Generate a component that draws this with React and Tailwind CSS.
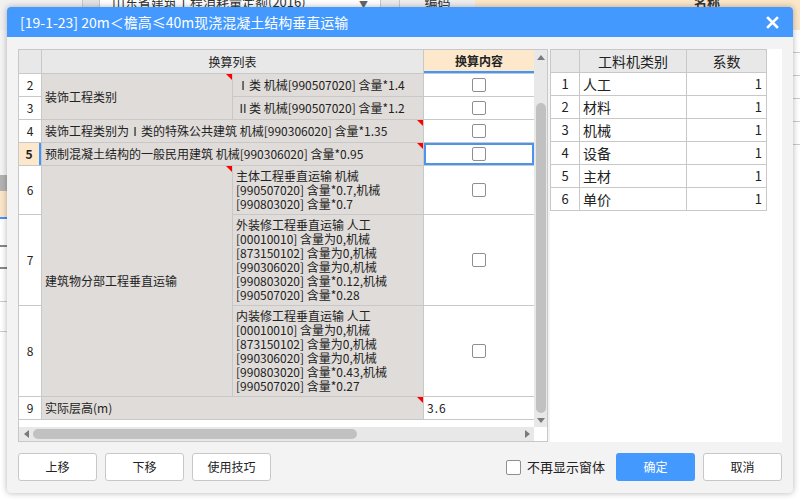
import React from 'react';

const cjk = "font-['Noto_Sans_CJK_SC','Liberation_Sans',sans-serif]";

const Tri = () => (
  <span className="absolute right-0 top-0 h-0 w-0 border-l-[6px] border-t-[6px] border-l-transparent border-t-[#ff0000]" />
);

const Box = () => (
  <span className="block h-[14px] w-[14px] rounded-[2px] border border-[#8f8f8f] bg-white" />
);

const Num = ({ n }) => (
  <div className="flex items-center justify-center bg-white text-[12px] text-[#222]">{n}</div>
);

const Check = () => (
  <div className="flex items-center justify-center bg-white">
    <Box />
  </div>
);

const Lines = ({ lines }) => (
  <div className="flex flex-col justify-center bg-[#e0dcd9] pl-[3px] text-[12px] leading-[14px] text-[#222]">
    {lines.map((l, i) => (
      <span key={i} className="whitespace-nowrap">{l}</span>
    ))}
  </div>
);

const LeftGrid = () => (
  <div className="grid grid-cols-[22px_190px_190px_110px] grid-rows-[23px_22px_22px_22px_22px_48px_90px_90px_22px] gap-px border-b border-[#c8c8c8] bg-[#c8c8c8] text-[12px] text-[#222]">
    {/* header */}
    <div className="bg-[#e8e8e8]" />
    <div className="col-span-2 flex items-center justify-center bg-[#e8e8e8]">换算列表</div>
    <div className="flex items-center justify-center border-b-2 border-[#4096ff] bg-[#fde8cc] font-bold">换算内容</div>

    {/* 2 */}
    <Num n="2" />
    <div className="relative row-span-2 flex items-center bg-[#e0dcd9] pl-[3px]">
      装饰工程类别
      <Tri />
    </div>
    <div className="flex items-center whitespace-nowrap bg-[#e0dcd9] pl-[4px]">Ⅰ类 机械[990507020] 含量*1.4</div>
    <Check />

    {/* 3 */}
    <Num n="3" />
    <div className="flex items-center whitespace-nowrap bg-[#e0dcd9] pl-[4px]">Ⅱ类 机械[990507020] 含量*1.2</div>
    <Check />

    {/* 4 */}
    <Num n="4" />
    <div className="relative col-span-2 flex items-center whitespace-nowrap bg-[#e0dcd9] pl-[3px]">
      装饰工程类别为Ⅰ类的特殊公共建筑 机械[990306020] 含量*1.35
      <Tri />
    </div>
    <Check />

    {/* 5 selected */}
    <div className="flex items-center justify-center border-r-2 border-[#4096ff] bg-[#fde8cc] text-[12px] font-bold">5</div>
    <div className="relative col-span-2 flex items-center whitespace-nowrap bg-[#e0dcd9] pl-[3px]">
      预制混凝土结构的一般民用建筑 机械[990306020] 含量*0.95
      <Tri />
    </div>
    <div className="flex items-center justify-center border-2 border-[#4a93ef] bg-white">
      <Box />
    </div>

    {/* 6 */}
    <Num n="6" />
    <div className="relative row-span-3 flex items-center bg-[#e0dcd9] pl-[3px]">
      建筑物分部工程垂直运输
      <Tri />
    </div>
    <Lines lines={['主体工程垂直运输 机械', '[990507020] 含量*0.7,机械', '[990803020] 含量*0.7']} />
    <Check />

    {/* 7 */}
    <Num n="7" />
    <Lines
      lines={[
        '外装修工程垂直运输 人工',
        '[00010010] 含量为0,机械',
        '[873150102] 含量为0,机械',
        '[990306020] 含量为0,机械',
        '[990803020] 含量*0.12,机械',
        '[990507020] 含量*0.28',
      ]}
    />
    <Check />

    {/* 8 */}
    <Num n="8" />
    <Lines
      lines={[
        '内装修工程垂直运输 人工',
        '[00010010] 含量为0,机械',
        '[873150102] 含量为0,机械',
        '[990306020] 含量为0,机械',
        '[990803020] 含量*0.43,机械',
        '[990507020] 含量*0.27',
      ]}
    />
    <Check />

    {/* 9 */}
    <Num n="9" />
    <div className="relative col-span-2 flex items-center bg-[#e0dcd9] pl-[3px]">
      实际层高(m)
      <Tri />
    </div>
    <div className="flex items-center bg-white pl-[3px] tracking-[1px]">3.6</div>
  </div>
);

const rightRows = ['人工', '材料', '机械', '设备', '主材', '单价'];

export default function App() {
  return (
    <div className={`relative h-[500px] w-[800px] overflow-hidden bg-white ${cjk}`}>
      {/* app behind the dialog */}
      <div className="flex h-[30px] text-[13px] text-[#333]">
        <div className="w-[83px] border-r border-[#c8c8c8] bg-[#f0f0f0]" />
        <div className="w-[17px] border-r border-[#c8c8c8] bg-[#e4e4e4]" />
        <div className="flex w-[280px] items-start justify-between bg-white px-[12px] leading-[10px]">
          <span className="-mt-[3px]">山东省建筑工程消耗量定额(2016)</span>
          <span className="text-[9px] text-[#666]">▼</span>
        </div>
        <div className="w-[20px] border-x border-[#c8c8c8] bg-[#ececec]" />
        <div className="flex w-[75px] justify-center bg-[#eeeeee] leading-[10px]">
          <span className="-mt-[3px]">编码</span>
        </div>
        <div className="flex flex-1 justify-end bg-[#fce6c9] pr-[80px] font-bold leading-[10px]">
          <span className="-mt-[3px]">名称</span>
        </div>
      </div>
      <div className="flex h-[470px]">
        <div className="flex w-[8px] flex-col">
          <div className="h-[145px] bg-[#f4f4f4]" />
          <div className="h-[16px] bg-[#b3b3b3]" />
          <div className="h-[28px] border-b-2 border-[#4096ff] bg-[#fce6c9]" />
          <div className="h-[28px] border-b-2 border-[#888]" />
          <div className="h-[22px] border-b-2 border-[#888]" />
          <div className="h-[33px] border-b border-[#ccc]" />
          <div className="h-[30px] border-b border-[#ccc]" />
          <div className="flex-1 bg-white" />
        </div>
        <div className="flex-1" />
        <div className="flex w-[8px] flex-col">
          <div className="h-[23px] border-b border-[#ccc]" />
          <div className="h-[23px] border-b border-[#ccc]" />
          <div className="h-[23px] border-b border-[#ccc]" />
          <div className="h-[23px] border-b border-[#ccc]" />
          <div className="h-[23px] border-b border-[#ccc]" />
          <div className="flex-1" />
        </div>
      </div>

      {/* dialog */}
      <div className="absolute left-[7px] top-[7px] flex h-[486px] w-[786px] flex-col overflow-hidden rounded-[4px] bg-[#f3f3f3] shadow-[0_0_6px_rgba(0,0,0,0.3)]">
        <div className="flex h-[30px] items-center justify-between bg-[#4499ff] pl-[13px] pr-[14px] text-[14px] text-white">
          <span>[19-1-23] 20m＜檐高≤40m现浇混凝土结构垂直运输</span>
          <svg width="13" height="13" viewBox="0 0 13 13">
            <path d="M2 2 L11 11 M11 2 L2 11" stroke="white" strokeWidth="2.6" strokeLinecap="square" />
          </svg>
        </div>

        <div className="flex flex-1 flex-col px-[11px] pt-[12px] pb-[12px]">
          <div className="flex gap-[2px]">
            {/* left panel */}
            <div className="flex h-[393px] w-[530px] flex-col border border-[#c8c8c8] bg-white">
              <div className="flex flex-1">
                <div className="flex flex-col">
                  <LeftGrid />
                  <div className="flex-1 bg-white" />
                </div>
                <div className="flex w-[13px] flex-col items-center bg-[#e8e8e8]">
                  <div className="flex h-[14px] items-center justify-center">
                    <span className="h-0 w-0 border-x-[4px] border-b-[5px] border-x-transparent border-b-[#7a7a7a]" />
                  </div>
                  <div className="h-[39px]" />
                  <div className="w-[10px] flex-1 rounded-full bg-[#c1c1c1]" />
                  <div className="flex h-[14px] items-center justify-center">
                    <span className="h-0 w-0 border-x-[4px] border-t-[5px] border-x-transparent border-t-[#7a7a7a]" />
                  </div>
                </div>
              </div>
              <div className="flex h-[14px]">
                <div className="flex flex-1 items-center bg-[#e8e8e8]">
                  <div className="flex w-[14px] items-center justify-center">
                    <span className="h-0 w-0 border-y-[4px] border-r-[5px] border-y-transparent border-r-[#7a7a7a]" />
                  </div>
                  <div className="h-[10px] w-[324px] rounded-full bg-[#c1c1c1]" />
                  <div className="flex-1" />
                  <div className="flex w-[14px] items-center justify-center">
                    <span className="h-0 w-0 border-y-[4px] border-l-[5px] border-y-transparent border-l-[#7a7a7a]" />
                  </div>
                </div>
                <div className="w-[13px] bg-white" />
              </div>
            </div>

            {/* right panel */}
            <div className="h-[393px] w-[232px] bg-white">
              <div className="inline-grid grid-cols-[28px_106px_79px] auto-rows-[22px] gap-px border border-[#c8c8c8] bg-[#c8c8c8] text-[14px] text-[#222]">
                <div className="bg-[#e8e8e8]" />
                <div className="flex items-center justify-center bg-[#e8e8e8]">工料机类别</div>
                <div className="flex items-center justify-center bg-[#e8e8e8]">系数</div>
                {rightRows.map((r, i) => (
                  <React.Fragment key={r}>
                    <div className="flex items-center justify-center bg-white text-[13px]">{i + 1}</div>
                    <div className="flex items-center bg-white pl-[3px]">{r}</div>
                    <div className="flex items-center justify-end bg-white pr-[4px] text-[13px]">1</div>
                  </React.Fragment>
                ))}
              </div>
            </div>
          </div>

          {/* buttons */}
          <div className="mt-[11px] flex h-[28px] items-center text-[12px] text-[#222]">
            <button className="h-[28px] w-[79px] rounded-[3px] border border-[#c8c8c8] bg-white">上移</button>
            <button className="ml-[8px] h-[28px] w-[79px] rounded-[3px] border border-[#c8c8c8] bg-white">下移</button>
            <button className="ml-[8px] h-[28px] w-[79px] rounded-[3px] border border-[#c8c8c8] bg-white">使用技巧</button>
            <div className="flex-1" />
            <span className="block h-[15px] w-[15px] rounded-[2px] border border-[#8f8f8f] bg-white" />
            <span className="ml-[6px] text-[13px]">不再显示窗体</span>
            <button className="ml-[11px] h-[28px] w-[79px] rounded-[3px] bg-[#4499ff] text-white">确定</button>
            <button className="ml-[8px] h-[28px] w-[79px] rounded-[3px] border border-[#c8c8c8] bg-white">取消</button>
          </div>
        </div>
      </div>
    </div>
  );
}
